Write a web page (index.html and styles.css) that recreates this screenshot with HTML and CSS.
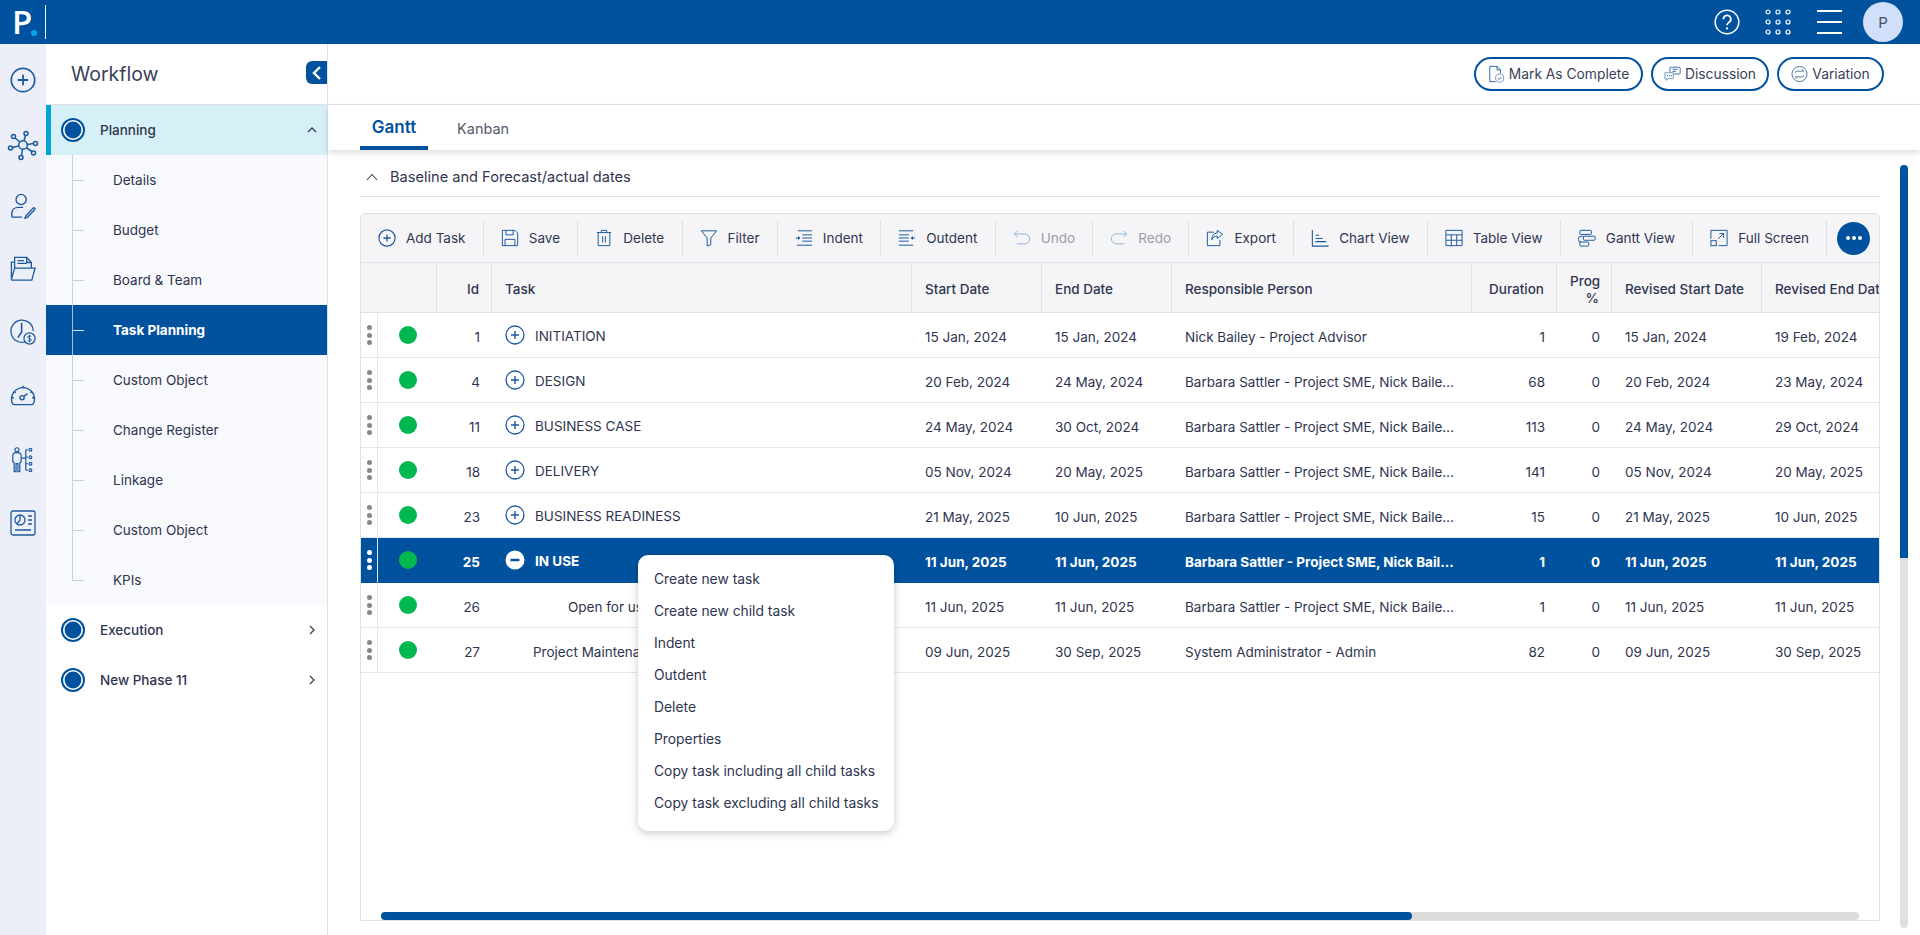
FILE: index.html
```html
<!DOCTYPE html>
<html lang="en">
<head>
<meta charset="utf-8">
<title>Workflow - Task Planning</title>
<link rel="stylesheet" href="styles.css">
</head>
<body>
<svg class="defs" width="0" height="0">
  <symbol id="plus-circle" viewBox="0 0 20 20"><circle cx="10" cy="10" r="9" fill="none" stroke="currentColor" stroke-width="1.3"/><path d="M10 6v8M6 10h8" fill="none" stroke="currentColor" stroke-width="1.4"/></symbol>
  <symbol id="minus-circle" viewBox="0 0 20 20"><circle cx="10" cy="10" r="9.5" fill="#fff"/><path d="M5.5 10h9" fill="none" stroke="#00529e" stroke-width="2.4"/></symbol>
  <symbol id="phase" viewBox="0 0 24 24"><circle cx="12" cy="12" r="11" fill="#fff" stroke="#00529e" stroke-width="2"/><circle cx="12" cy="12" r="8.4" fill="#00529e"/></symbol>
</svg>
<div class="app">
  <header class="topbar">
    <div class="logo"><span class="logo-p">P</span><span class="logo-dot"></span></div>
    <div class="top-actions">
      <svg class="top-help" viewBox="0 0 26 26"><circle cx="13" cy="13" r="11.8" fill="none" stroke="#fff" stroke-width="1.5"/><path d="M9.4 10.2a3.7 3.7 0 1 1 5.6 3.1c-1.3.8-2 1.5-2 3" fill="none" stroke="#fff" stroke-width="1.7"/><circle cx="13" cy="19.4" r="1.1" fill="#fff"/></svg>
      <svg class="top-grid" viewBox="0 0 26 26"><g fill="none" stroke="#fff" stroke-width="1.2"><circle cx="3" cy="3" r="2"/><circle cx="13" cy="3" r="2"/><circle cx="23" cy="3" r="2"/><circle cx="3" cy="13" r="2"/><circle cx="13" cy="13" r="2"/><circle cx="23" cy="13" r="2"/><circle cx="3" cy="23" r="2"/><circle cx="13" cy="23" r="2"/><circle cx="23" cy="23" r="2"/></g></svg>
      <div class="hamburger"><span></span><span></span><span></span></div>
      <div class="avatar">P</div>
    </div>
  </header>
  <div class="shell">
    <nav class="rail">
      <svg class="rail-icon" viewBox="0 0 26 26"><use href="#plus-circle"/></svg>
      <svg class="rail-icon" viewBox="0 0 30 30"><g fill="none" stroke="currentColor" stroke-width="1.5"><circle cx="15" cy="15" r="4.300"/><circle cx="18" cy="3.500" r="2"/><circle cx="5.500" cy="6.500" r="2"/><circle cx="2.500" cy="18" r="2"/><circle cx="13" cy="27.500" r="2"/><circle cx="25.500" cy="23" r="2"/><circle cx="27.500" cy="13.500" r="2"/><path d="M17.500 5.500L16 10.800M7 8l5 4M4.500 17.500l6.300-1.500M13.700 25.500l.6-6.200M24 21.500l-5.500-3.500M25.500 13.500l-6.200 1"/></g></svg>
      <svg class="rail-icon" viewBox="0 0 28 28"><g fill="none" stroke="currentColor" stroke-width="1.5"><circle cx="12" cy="7" r="5.500"/><path d="M2 26v-4c0-4 3-6.500 7-6.500h5M2 26h11"/><path d="M17 25l-1 2 2.500-.5 8-8.500a1.200 1.200 0 0 0-1.700-1.700z"/></g></svg>
      <svg class="rail-icon" viewBox="0 0 28 28"><g fill="none" stroke="currentColor" stroke-width="1.400"><path d="M1.500 25V6.500h3M1.500 25L5 13h22l-3.500 13H2z"/><path d="M5 13V1.500h13l5 5.500v6"/><path d="M8 5h7M8 8h10M18 2v5h5"/></g></svg>
      <svg class="rail-icon" viewBox="0 0 28 28"><g fill="none" stroke="currentColor" stroke-width="1.400"><path d="M17 24.500A12 12 0 1 1 25 13"/><path d="M12.500 4v10l-4 6" stroke-width="1.700"/><circle cx="21" cy="21" r="6"/><path d="M23 18.800c-1-.8-4-.8-4 .9s4 1.100 4 2.800-3 1.700-4 .8M21 16.800v8.400" stroke-width="1"/></g></svg>
      <svg class="rail-icon" viewBox="0 0 28 24"><g fill="none" stroke="currentColor" stroke-width="1.500"><path d="M4 22.500c-2-1-2.500-3-2.500-6a12.500 12.500 0 0 1 25 0c0 3-.5 5-2.500 6z"/><circle cx="13" cy="15" r="2.300"/><path d="M15 13.500l4-3M14 2v2.500M4 8l2 1.500M24 8l-2 1.500M2 15h2M24 15h2"/></g></svg>
      <svg class="rail-icon" viewBox="0 0 26 28"><g fill="none" stroke="currentColor" stroke-width="1.300"><circle cx="6.500" cy="3" r="2.200"/><path d="M2 16V9c0-2 1.500-3 4.500-3s4.500 1 4.500 3v7l-1.500 1V26.500h-2V18h-2v8.500h-2V17zM11 12h5M16 3v22M16 3h2M16 11h2M16 18h2M16 25h2"/><circle cx="21" cy="3" r="1.500"/><circle cx="21" cy="11" r="1.500"/><circle cx="21" cy="18" r="1.500"/><circle cx="21" cy="25" r="1.500"/></g></svg>
      <svg class="rail-icon" viewBox="0 0 26 26"><g fill="none" stroke="currentColor" stroke-width="1.300"><rect x="1" y="1" width="24" height="24" rx="2"/><circle cx="10" cy="10" r="5"/><path d="M10 5v5l-3 4M18 6h4M18 10h4M18 14h4M5 20h16"/></g></svg>
    </nav>
    <aside class="sidebar">
      <div class="side-head">
        <span class="side-title">Workflow</span>
        <button class="collapse"><svg viewBox="0 0 12 16"><path d="M9 2L3 8l6 6" fill="none" stroke="#fff" stroke-width="2.400"/></svg></button>
      </div>
      <div class="phase phase-open">
        <svg class="phase-dot" viewBox="0 0 24 24"><use href="#phase"/></svg>
        <span class="phase-name">Planning</span>
        <svg class="chev" viewBox="0 0 12 12"><path d="M2 8l4-4 4 4" fill="none" stroke="#3a4058" stroke-width="1.300"/></svg>
      </div>
      <ul class="sub">
        <li>Details</li>
        <li>Budget</li>
        <li>Board &amp; Team</li>
        <li class="active">Task Planning</li>
        <li>Custom Object</li>
        <li>Change Register</li>
        <li>Linkage</li>
        <li>Custom Object</li>
        <li class="last">KPIs</li>
      </ul>
      <div class="phase">
        <svg class="phase-dot" viewBox="0 0 24 24"><use href="#phase"/></svg>
        <span class="phase-name">Execution</span>
        <svg class="chev" viewBox="0 0 12 12"><path d="M4 2l4 4-4 4" fill="none" stroke="#3a4058" stroke-width="1.300"/></svg>
      </div>
      <div class="phase">
        <svg class="phase-dot" viewBox="0 0 24 24"><use href="#phase"/></svg>
        <span class="phase-name">New Phase 11</span>
        <svg class="chev" viewBox="0 0 12 12"><path d="M4 2l4 4-4 4" fill="none" stroke="#3a4058" stroke-width="1.300"/></svg>
      </div>
    </aside>
    <main class="main">
      <div class="actions">
        <button class="pill pill-mark"><svg viewBox="0 0 18 20"><g fill="none" stroke="#1c5aa0" stroke-width="1"><path d="M8 18.500H1.500V1.500h8l4 4v4M9.500 1.500v4h4"/><circle cx="12.500" cy="14.500" r="4.500" stroke="#6b8fb8"/><path d="M10.500 14.500l1.500 1.500 2.500-2.500"/></g></svg>Mark As Complete</button>
        <button class="pill pill-disc"><svg viewBox="0 0 20 18"><g fill="none" stroke="#1c5aa0" stroke-width="1"><rect x="7" y="1" width="12" height="8" rx="1"/><path d="M10 3.500h6M10 6h4"/><path d="M1 7.500h10v7H5l-2 2v-2H1z" fill="#fff" stroke="#6b8fb8"/><path d="M3.500 11h1M6 11h1M8.500 11h1" stroke-width="1.400"/></g></svg>Discussion</button>
        <button class="pill pill-var"><svg viewBox="0 0 18 18"><g fill="none" stroke="#4a6f9c" stroke-width="1"><circle cx="9" cy="9" r="8"/><path d="M4.500 8V7.500c0-1 .7-1.500 1.500-1.500h7.500l-2-2M13.500 10v.5c0 1-.7 1.500-1.500 1.500H4.500l2 2"/></g></svg>Variation</button>
      </div>
      <div class="tabs">
        <span class="tab tab-on">Gantt</span>
        <span class="tab">Kanban</span>
      </div>
      <div class="body">
        <div class="content">
          <div class="section-title">
            <svg viewBox="0 0 12 8"><path d="M1 7l5-5.500L11 7" fill="none" stroke="#3a4058" stroke-width="1.100"/></svg>
            <span>Baseline and Forecast/actual dates</span>
          </div>
          <section class="gantt">
            <div class="toolbar">
              <div class="tool"><svg viewBox="0 0 20 20"><use href="#plus-circle"/></svg>Add Task</div>
              <div class="tool"><svg viewBox="0 0 20 20"><g fill="none" stroke="currentColor" stroke-width="1.100"><path d="M1.500 1.500h14l3 3v14h-17z"/><path d="M5.500 1.500v5h8v-5M4.500 18.500v-7h11v7"/></g></svg>Save</div>
              <div class="tool"><svg viewBox="0 0 20 20"><g fill="none" stroke="currentColor" stroke-width="1.100"><path d="M2 4h16M7 4V1.500h6V4M3.500 4v14.500h13V4M8.500 8v7M11.500 8v7"/></g></svg>Delete</div>
              <div class="tool"><svg viewBox="0 0 20 20"><path d="M1.500 2h17l-6.500 8v7.500l-4 1.500v-9z" fill="none" stroke="currentColor" stroke-width="1.100"/></svg>Filter</div>
              <div class="tool"><svg viewBox="0 0 20 20"><g fill="none" stroke="currentColor" stroke-width="1.100"><path d="M3 2h16M8 6.500h11M8 10h11M8 13.500h11M2 18h17"/><path d="M1 10h4M3.500 8.500L5 10l-1.500 1.500" stroke-width="1.300"/></g></svg>Indent</div>
              <div class="tool"><svg viewBox="0 0 20 20"><g fill="none" stroke="currentColor" stroke-width="1.100"><path d="M1 2h16M1 6.500h11M1 10h11M1 13.500h11M1 18h16"/><path d="M19 10h-4M16.500 8.500L15 10l1.500 1.500" stroke-width="1.300"/></g></svg>Outdent</div>
              <div class="tool tool-off"><svg viewBox="0 0 20 20"><path d="M5 2L1.500 5.500 5 9M1.500 5.500H13a5.500 5.500 0 0 1 0 11H4" fill="none" stroke="currentColor" stroke-width="1.100"/></svg>Undo</div>
              <div class="tool tool-off"><svg viewBox="0 0 20 20"><path d="M15 2l3.500 3.500L15 9M18.500 5.500H7a5.500 5.500 0 0 0 0 11h9" fill="none" stroke="currentColor" stroke-width="1.100"/></svg>Redo</div>
              <div class="tool"><svg viewBox="0 0 20 20"><g fill="none" stroke="currentColor" stroke-width="1.100"><path d="M9 3.500H1.500v15h14V12"/><path d="M12.500 1.500l6 4.500-6 4.500V8c-3 0-5 1-6 4 0-5 2.500-7.500 6-7.500z"/></g></svg>Export</div>
              <div class="tool"><svg viewBox="0 0 20 20"><path d="M1.500 1v18h18M5 7h4M5 10.500h8M5 14h12" fill="none" stroke="currentColor" stroke-width="1.200"/></svg>Chart View</div>
              <div class="tool"><svg viewBox="0 0 20 20"><path d="M1 1.500h18v17H1zM1 6.500h18M1 12.500h18M7 6.500v12M13 6.500v12" fill="none" stroke="currentColor" stroke-width="1.100"/></svg>Table View</div>
              <div class="tool"><svg viewBox="0 0 20 20"><g fill="none" stroke="currentColor" stroke-width="1.100"><rect x="2" y="1.500" width="13" height="4.500" rx="1"/><rect x="6" y="8" width="13" height="4.500" rx="1"/><rect x="2" y="14.500" width="10" height="4.500" rx="1"/><path d="M6 8H3.500a1 1 0 0 0 0 6.500"/></g></svg>Gantt View</div>
              <div class="tool"><svg viewBox="0 0 20 20"><g fill="none" stroke="currentColor" stroke-width="1.100"><path d="M1 11V1.500h18v17H9.500"/><rect x="1" y="13" width="6" height="5.500"/><path d="M9 11l6-6M10.500 5H15v4.500"/></g></svg>Full Screen</div>
              <button class="more"><span></span><span></span><span></span></button>
            </div>
            <div class="table-wrap">
              <table class="tasks">
                <colgroup>
                  <col class="c-handle"><col class="c-status"><col class="c-id"><col class="c-task"><col class="c-date"><col class="c-date"><col class="c-person"><col class="c-dur"><col class="c-prog"><col class="c-rev"><col class="c-rev">
                </colgroup>
                <thead>
                  <tr>
                    <th class="no-line"></th><th></th><th class="num">Id</th><th>Task</th><th>Start Date</th><th>End Date</th><th>Responsible Person</th><th class="num">Duration</th><th class="num">Prog %</th><th>Revised Start Date</th><th class="nowrap">Revised End Date</th>
                  </tr>
                </thead>
                <tbody>
                  <tr>
                    <td class="handle"><i></i><i></i><i></i></td><td class="status"><b></b></td><td class="num">1</td>
                    <td class="task"><svg class="expand" viewBox="0 0 20 20"><use href="#plus-circle"/></svg>INITIATION</td>
                    <td>15 Jan, 2024</td><td>15 Jan, 2024</td><td class="person">Nick Bailey - Project Advisor</td><td class="num">1</td><td class="num">0</td><td>15 Jan, 2024</td><td>19 Feb, 2024</td>
                  </tr>
                  <tr>
                    <td class="handle"><i></i><i></i><i></i></td><td class="status"><b></b></td><td class="num">4</td>
                    <td class="task"><svg class="expand" viewBox="0 0 20 20"><use href="#plus-circle"/></svg>DESIGN</td>
                    <td>20 Feb, 2024</td><td>24 May, 2024</td><td class="person">Barbara Sattler - Project SME, Nick Bailey - Project Advisor</td><td class="num">68</td><td class="num">0</td><td>20 Feb, 2024</td><td>23 May, 2024</td>
                  </tr>
                  <tr>
                    <td class="handle"><i></i><i></i><i></i></td><td class="status"><b></b></td><td class="num">11</td>
                    <td class="task"><svg class="expand" viewBox="0 0 20 20"><use href="#plus-circle"/></svg>BUSINESS CASE</td>
                    <td>24 May, 2024</td><td>30 Oct, 2024</td><td class="person">Barbara Sattler - Project SME, Nick Bailey - Project Advisor</td><td class="num">113</td><td class="num">0</td><td>24 May, 2024</td><td>29 Oct, 2024</td>
                  </tr>
                  <tr>
                    <td class="handle"><i></i><i></i><i></i></td><td class="status"><b></b></td><td class="num">18</td>
                    <td class="task"><svg class="expand" viewBox="0 0 20 20"><use href="#plus-circle"/></svg>DELIVERY</td>
                    <td>05 Nov, 2024</td><td>20 May, 2025</td><td class="person">Barbara Sattler - Project SME, Nick Bailey - Project Advisor</td><td class="num">141</td><td class="num">0</td><td>05 Nov, 2024</td><td>20 May, 2025</td>
                  </tr>
                  <tr>
                    <td class="handle"><i></i><i></i><i></i></td><td class="status"><b></b></td><td class="num">23</td>
                    <td class="task"><svg class="expand" viewBox="0 0 20 20"><use href="#plus-circle"/></svg>BUSINESS READINESS</td>
                    <td>21 May, 2025</td><td>10 Jun, 2025</td><td class="person">Barbara Sattler - Project SME, Nick Bailey - Project Advisor</td><td class="num">15</td><td class="num">0</td><td>21 May, 2025</td><td>10 Jun, 2025</td>
                  </tr>
                  <tr class="selected">
                    <td class="handle"><i></i><i></i><i></i></td><td class="status"><b></b></td><td class="num">25</td>
                    <td class="task"><svg class="expand" viewBox="0 0 20 20"><use href="#minus-circle"/></svg>IN USE</td>
                    <td>11 Jun, 2025</td><td>11 Jun, 2025</td><td class="person">Barbara Sattler - Project SME, Nick Bailey - Project Advisor</td><td class="num">1</td><td class="num">0</td><td>11 Jun, 2025</td><td>11 Jun, 2025</td>
                  </tr>
                  <tr>
                    <td class="handle"><i></i><i></i><i></i></td><td class="status"><b></b></td><td class="num">26</td>
                    <td class="task indent-2">Open for use</td>
                    <td>11 Jun, 2025</td><td>11 Jun, 2025</td><td class="person">Barbara Sattler - Project SME, Nick Bailey - Project Advisor</td><td class="num">1</td><td class="num">0</td><td>11 Jun, 2025</td><td>11 Jun, 2025</td>
                  </tr>
                  <tr>
                    <td class="handle"><i></i><i></i><i></i></td><td class="status"><b></b></td><td class="num">27</td>
                    <td class="task indent-1">Project Maintenance</td>
                    <td>09 Jun, 2025</td><td>30 Sep, 2025</td><td class="person">System Administrator - Admin</td><td class="num">82</td><td class="num">0</td><td>09 Jun, 2025</td><td>30 Sep, 2025</td>
                  </tr>
                </tbody>
              </table>
            </div>
            <div class="hscroll"><div class="hthumb"></div></div>
          </section>
        </div>
        <div class="vscroll"><div class="vthumb"></div></div>
      </div>
    </main>
  </div>
  <ul class="context-menu">
    <li>Create new task</li>
    <li>Create new child task</li>
    <li>Indent</li>
    <li>Outdent</li>
    <li>Delete</li>
    <li>Properties</li>
    <li>Copy task including all child tasks</li>
    <li>Copy task excluding all child tasks</li>
  </ul>
</div>
</body>
</html>
```
FILE: styles.css
```css
* { box-sizing: border-box; }
html, body { margin: 0; height: 100%; overflow: hidden; }
body { font-family: Inter, "Noto Sans", sans-serif; font-size: 13.5px; color: #2f3550; background: #fff; }
.defs { position: absolute; }
.app { position: relative; width: 1920px; height: 935px; display: flex; flex-direction: column; overflow: hidden; }

.topbar { height: 44px; flex: none; background: #00529e; display: flex; align-items: center; justify-content: space-between; }
.logo { position: relative; width: 46px; height: 34px; border-right: 1px solid #fff; display: flex; align-items: center; padding-left: 12px; }
.logo-p { color: #fff; font-size: 33px; font-weight: 600; line-height: 34px; font-family: "Open Sans", sans-serif; }
.logo-dot { position: absolute; left: 31px; top: 25px; width: 6px; height: 6px; border-radius: 50%; background: #0aa5e6; }
.top-actions { display: flex; align-items: center; padding-right: 17px; }
.top-help { width: 26px; height: 26px; margin-right: 25px; }
.top-grid { width: 26px; height: 26px; margin-right: 26px; }
.hamburger { width: 25px; height: 24px; display: flex; flex-direction: column; justify-content: space-between; margin-right: 21px; }
.hamburger span { display: block; height: 2px; background: #fff; }
.avatar { width: 40px; height: 40px; border-radius: 50%; background: #d0dffa; color: #4a4f68; display: flex; align-items: center; justify-content: center; font-size: 15px; }

.shell { flex: 1; display: flex; min-height: 0; }
.rail { width: 46px; flex: none; background: #eceff7; display: flex; flex-direction: column; align-items: center; color: #1c5aa0; padding-top: 23px; }
.rail-icon { width: 26px; height: 26px; margin-bottom: 37px; flex: none; overflow: visible; }
.rail-icon:nth-child(2) { width: 30px; height: 30px; margin-bottom: 33px; }
.rail-icon:nth-child(3) { margin-bottom: 37px; }
.rail-icon:nth-child(5) { margin-bottom: 39px; }
.rail-icon:nth-child(6) { height: 22px; margin-bottom: 41px; }

.sidebar { width: 282px; flex: none; border-right: 1px solid #dfe1e6; background: #fff; }
.side-head { height: 61px; border-bottom: 1px solid #dfe1e6; display: flex; align-items: center; justify-content: space-between; padding-left: 25px; }
.side-title { font-size: 19.500px; color: #3a3f58; }
.collapse { width: 21px; height: 23px; border: 0; padding: 0; background: #00529e; border-radius: 6px 0 0 6px; display: flex; align-items: center; justify-content: center; margin-top: -3px; }
.collapse svg { width: 12px; height: 16px; }
.phase { height: 50px; display: flex; align-items: center; padding-left: 15px; padding-right: 9px; font-weight: 500; }
.phase-open { background: #d6f0f7; border-left: 5px solid #06a3d6; padding-left: 10px; }
.phase-dot { width: 24px; height: 24px; flex: none; }
.phase-name { margin-left: 15px; flex: 1; }
.chev { width: 12px; height: 12px; flex: none; }
.sub { list-style: none; margin: 0; padding: 0; background: #f8f9fc; }
.sub li { position: relative; height: 50px; line-height: 50px; padding-left: 67px; }
.sub li::before { content: ""; position: absolute; left: 26px; top: 0; bottom: 0; width: 1px; background: #bcd4ea; }
.sub li::after { content: ""; position: absolute; left: 27px; top: 25px; width: 11px; height: 1px; background: #bcd4ea; }
.sub li.last::before { bottom: 24px; }
.sub li.active { background: #00529e; color: #fff; font-weight: 700; }
.sub li.active::after { background: #d6e4f2; }
.sub li.active::before { background: #9fc0e0; }

.main { flex: 1; min-width: 0; display: flex; flex-direction: column; }
.actions { height: 61px; flex: none; border-bottom: 1px solid #dfe1e6; display: flex; justify-content: flex-end; align-items: center; gap: 8px; padding-right: 36px; padding-bottom: 1px; }
.pill { height: 34px; border: 2px solid #00529e; border-radius: 17px; background: #fff; font: inherit; font-size: 13.800px; color: #3a3f58; display: flex; align-items: center; justify-content: center; gap: 4px; padding: 0; }
.pill svg { width: 17px; height: 18px; }
.pill-mark { width: 169px; }
.pill-disc { width: 118px; }
.pill-var { width: 107px; }
.tabs { height: 45px; flex: none; display: flex; padding-left: 32px; box-shadow: 0 3px 6px rgba(0,0,0,.13); position: relative; }
.tab { line-height: 48px; font-size: 14.500px; color: #555a6c; margin-left: 29px; }
.tab-on { width: 68px; margin-left: 0; text-align: center; color: #00529e; font-weight: 600; font-size: 17px; line-height: 44px; border-bottom: 4px solid #00529e; }
.body { flex: 1; min-height: 0; display: flex; padding-left: 32px; }
.content { width: 1520px; flex: none; display: flex; flex-direction: column; }
.section-title { height: 47px; flex: none; border-bottom: 1px solid #dfe1e6; display: flex; align-items: center; padding: 7px 0 0 6px; gap: 12px; margin-bottom: 16px; font-size: 14.600px; }
.section-title svg { width: 12px; height: 8px; }
.vscroll { width: 8px; margin: 15px 0 7px 20px; background: #e0e0e0; border-radius: 4px; }
.vthumb { height: 393px; background: #00529e; border-radius: 4px 4px 0 0; }

.gantt { height: 708px; border: 1px solid #e0e1e6; border-radius: 5px 5px 0 0; display: flex; flex-direction: column; overflow: hidden; }
.toolbar { height: 49px; flex: none; background: #f5f5f8; border-bottom: 1px solid #e0e1e6; display: flex; align-items: center; }
.tool { height: 36px; display: flex; align-items: center; gap: 10px; padding: 0 17.300px 0 17px; border-right: 1px solid #e0e1e6; color: #2f3550; white-space: nowrap; }
.tool svg { width: 18px; height: 18px; color: #1c5aa0; flex: none; }
.tool-off { color: #9a9daa; }
.tool-off svg { color: #8db4d8; }
.more { width: 33px; height: 33px; border-radius: 50%; background: #00529e; border: 0; margin-left: 10px; padding: 0; display: flex; align-items: center; justify-content: center; gap: 2px; flex: none; }
.more span { width: 4px; height: 4px; background: #fff; border-radius: 50%; }

.table-wrap { flex: 1; min-height: 0; overflow: hidden; }
.tasks { table-layout: fixed; border-collapse: separate; border-spacing: 0; width: 1535px; }
.c-handle { width: 17px; }
.c-status { width: 59px; }
.c-id { width: 55px; }
.c-task { width: 420px; }
.c-date { width: 130px; }
.c-person { width: 300px; }
.c-dur { width: 85px; }
.c-prog { width: 55px; }
.c-rev { width: 150px; }
.tasks th { height: 50px; background: #f5f5f8; font-weight: 500; text-align: left; padding: 4px 12px 0 13px; border-bottom: 1px solid #e0e1e6; border-right: 1px solid #e0e1e6; line-height: 17px; }
.tasks th.no-line { border-right: 0; }
.tasks th.num { text-align: right; }
.tasks th.nowrap { white-space: nowrap; overflow: hidden; }
.tasks td { height: 45px; padding: 3px 12px 0 13px; border-bottom: 1px solid #e5e6ea; white-space: nowrap; overflow: hidden; }
.tasks td.num { text-align: right; }
.tasks td.person { text-overflow: ellipsis; padding-right: 11px; }
.tasks td.handle { padding: 0; border-right: 1px solid #e5e6ea; }
.handle i { display: block; width: 5px; height: 5px; border-radius: 50%; background: #878787; margin: 2.500px auto 2.500px 6px; }
.tasks td.status { padding: 0 0 0 21px; }
.status b { display: block; width: 18px; height: 18px; border-radius: 50%; background: #00b84f; }
.expand { width: 20px; height: 20px; color: #1c5aa0; vertical-align: middle; margin-right: 10px; margin-top: -3px; }
.indent-1 { text-indent: 28px; }
.indent-2 { text-indent: 63px; }
.selected td { background: #00529e; color: #fff; font-weight: 700; }
.tasks tr.selected td { border-bottom-color: #00529e; }
.selected .handle i { background: #fff; }

.hscroll { height: 8px; flex: none; margin: 0 20px; background: #dcdcdc; border-radius: 4px; }
.hthumb { width: 1031px; height: 8px; background: #00529e; border-radius: 4px; }

.context-menu { position: absolute; left: 638px; top: 555px; width: 256px; height: 276px; list-style: none; margin: 0; padding: 8px 0 0 16px; background: #fff; border-radius: 10px; box-shadow: 0 2px 8px rgba(0,0,0,.22); font-size: 13.850px; }
.context-menu li { height: 32px; line-height: 32px; white-space: nowrap; }
```
